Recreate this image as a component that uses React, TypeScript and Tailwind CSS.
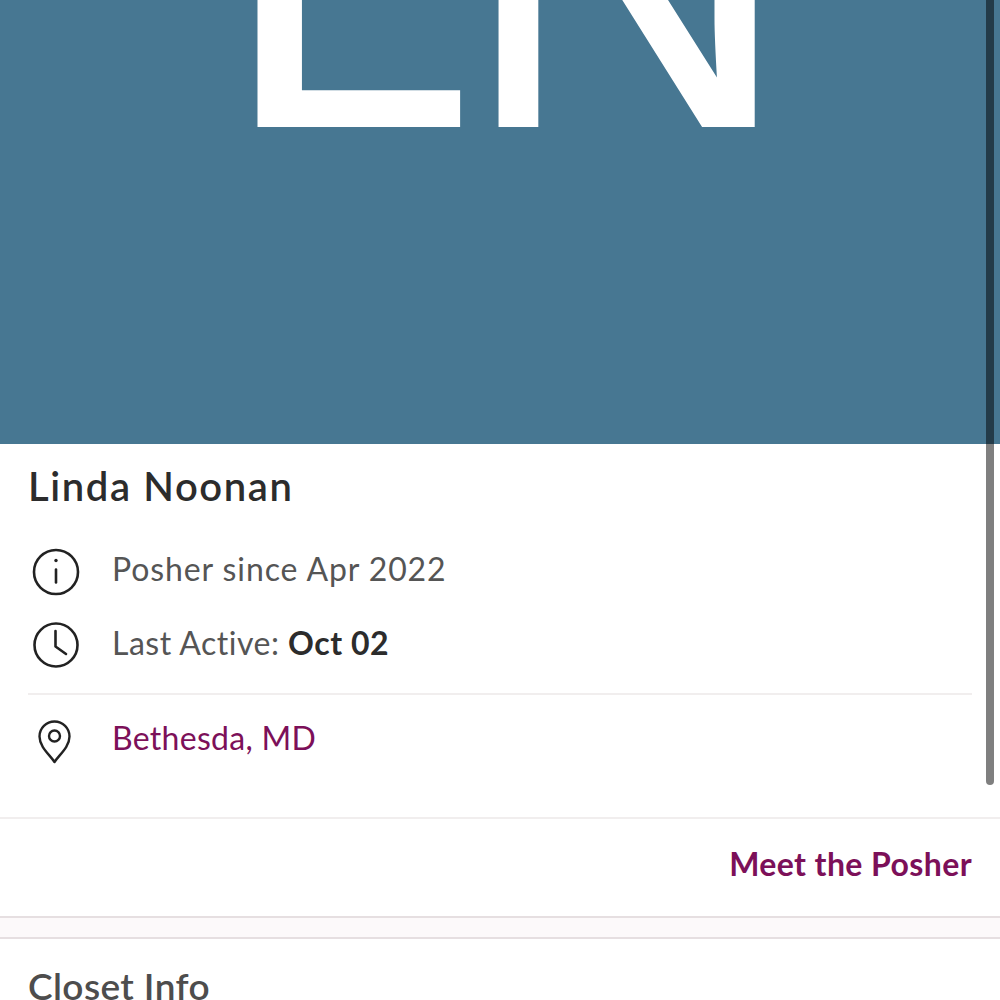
import { FC } from "react";

const font = { fontFamily: '"Lato", "Open Sans", sans-serif' };

const InfoIcon: FC = () => (
  <svg className="translate-y-[3px]" width="48" height="48" viewBox="0 0 48 48" fill="none" stroke="#222" strokeWidth="2.6" strokeLinecap="round">
    <circle cx="24" cy="24" r="22" />
    <path d="M24 21.500v13" />
    <circle cx="24" cy="12.500" r="1.700" fill="#222" stroke="none" />
  </svg>
);

const ClockIcon: FC = () => (
  <svg className="translate-y-[2px]" width="48" height="48" viewBox="0 0 48 48" fill="none" stroke="#222" strokeWidth="2.6" strokeLinecap="round" strokeLinejoin="round">
    <circle cx="24" cy="24" r="21.500" />
    <path d="M23.500 10v15.500L34 33" />
  </svg>
);

const PinIcon: FC = () => (
  <svg className="translate-y-[3px]" width="48" height="48" viewBox="0 0 48 48" fill="none" stroke="#222" strokeWidth="2.4" strokeLinejoin="round">
    <path d="M22.500 45C18 38 7.500 30 7.500 19.500a15 15 0 0 1 30 0C37.500 30 27 38 22.500 45z" />
    <circle cx="22.500" cy="19" r="5.500" />
  </svg>
);

export default function App() {
  return (
    <div className="relative h-[1000px] w-[1000px] overflow-hidden bg-white" style={font}>
      {/* cover */}
      <div className="flex h-[444px] justify-center overflow-hidden bg-[#477792]">
        <span
          className="mt-[-282px] h-[500px] text-[455px] leading-[500px] font-normal tracking-[-12px] whitespace-nowrap text-white [-webkit-text-stroke:2px_#fff]"
          style={{ fontFamily: '"Liberation Sans", sans-serif' }}
        >
          LN
        </span>
      </div>

      <div className="px-7">
        <h1 className="mt-[20px] text-[40px] leading-[44px] font-semibold tracking-[1.6px] text-[#2c2c2c]">Linda Noonan</h1>
        <div className="mt-[35px] flex h-[52px] items-center gap-[32px] pl-[4px] text-[32px] tracking-[0.9px] text-[#555]">
          <InfoIcon />
          <span>Posher since Apr 2022</span>
        </div>
        <div className="mt-[22px] flex h-[52px] items-center gap-[32px] pl-[4px] text-[32px] tracking-[0.5px] text-[#555]">
          <ClockIcon />
          <span>
            Last Active: <b className="font-bold text-[#2c2c2c]">Oct 02</b>
          </span>
        </div>
        <div className="mt-[24px] h-[2px] bg-[#f1eeee]" />
        <div className="mt-[17px] flex h-[52px] items-center gap-[32px] pl-[4px] text-[32px] tracking-[0.3px] text-[#7c1059]">
          <PinIcon />
          <span>Bethesda, MD</span>
        </div>
      </div>

      <div className="mt-[53px] h-[2px] bg-[#f1eeee]" />
      <div className="flex h-[97px] items-center justify-end px-7 pb-[8px] text-[32px] font-bold tracking-[0.4px] text-[#7c1059]">
        Meet the Posher
      </div>
      <div className="h-[23px] border-y-2 border-[#e6dfe1] bg-[#fcf9fa]" />
      <h2 className="mt-[25px] px-7 text-[37px] leading-[44px] font-semibold tracking-[0.4px] text-[#4d4d4d]">Closet Info</h2>

      {/* scrollbar */}
      <div className="absolute top-0 left-[986px] h-[785px] w-[8px] rounded-b-full bg-black/50" />
    </div>
  );
}
